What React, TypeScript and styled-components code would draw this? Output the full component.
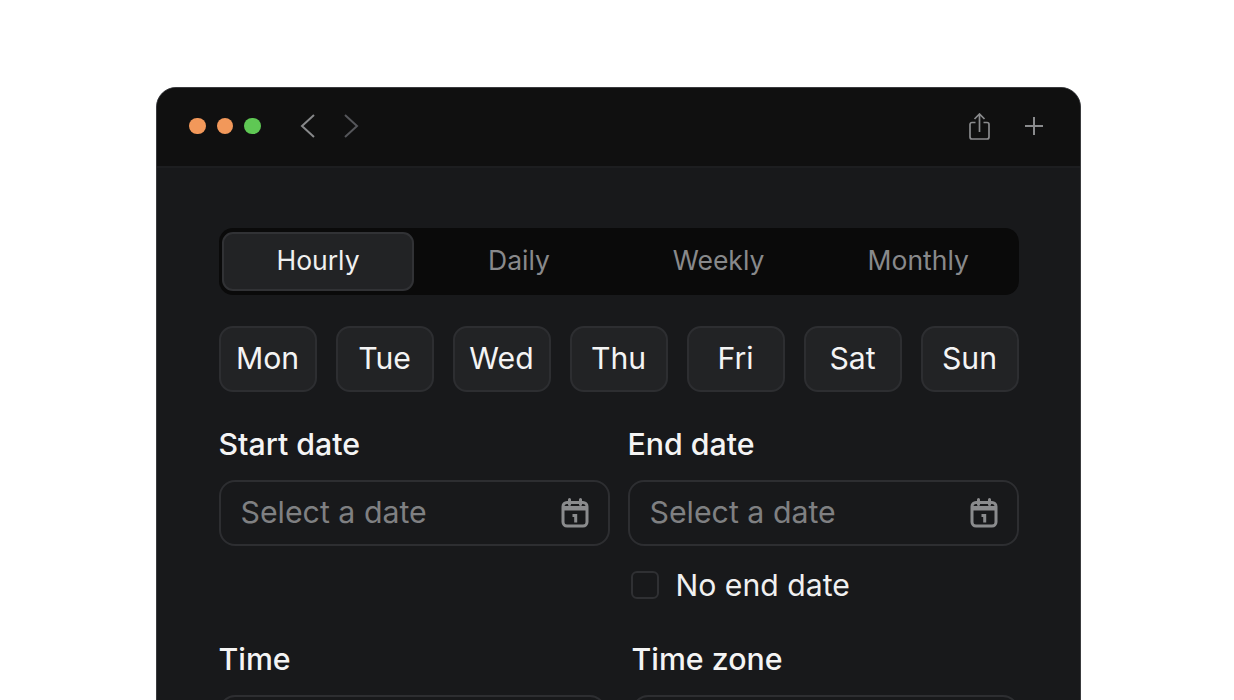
import React from "react";
import styled, { createGlobalStyle } from "styled-components";

const Global = createGlobalStyle`
  html, body { margin: 0; padding: 0; background: #fff; height: 700px; overflow: hidden; }
  body { font-family: Inter, "Liberation Sans", sans-serif; }
`;
const Page = styled.div`
  height: 700px; overflow: hidden; padding: 87px 153px 0 156px; box-sizing: border-box;
`;
const Win = styled.div`
  width: 925px; height: 760px; box-sizing: border-box; background: #18191b;
  border: 1px solid #3a3b3e; border-radius: 20px; overflow: hidden;
`;
const TitleBar = styled.div`
  height: 76px; background: #101010; border-bottom: 2px solid #1d1e20; display: flex; align-items: center;
  padding: 0 36px 2px 32px; box-sizing: content-box;
`;
const Dots = styled.div`display: flex; gap: 11px; margin-right: 39.5px;`;
const Dot = styled.span<{ $c: string }>`
  width: 16.5px; height: 16.5px; border-radius: 50%; background: ${p => p.$c};
`;
const Nav = styled.div`display: flex; gap: 29px; align-items: center; flex: 1;`;
const Tools = styled.div`display: flex; gap: 34px; align-items: center;`;
const Body = styled.div`padding: 60px 61.5px 0 61.5px; display: flex; flex-direction: column;`;
const Segments = styled.div`
  height: 67px; box-sizing: border-box; background: #0a0a0a; border-radius: 14px; padding: 4px 0 4px 3.5px;
  display: grid; grid-template-columns: 197px 200px 199px 1fr;
`;
const Segment = styled.div<{ $on?: boolean }>`
  display: flex; align-items: center; justify-content: center; font-size: 26.5px; border-radius: 11px;
  padding-bottom: 3px; box-sizing: border-box;
  color: ${p => (p.$on ? "#f0f0f0" : "#88898b")};
  background: ${p => (p.$on ? "#222325" : "transparent")};
  border: 2px solid ${p => (p.$on ? "#313235" : "transparent")};
  margin-right: ${p => (p.$on ? "5px" : "0")};
`;
const Days = styled.div`display: flex; justify-content: space-between; margin-top: 31px;`;
const Day = styled.div`
  width: 98px; height: 66px; box-sizing: border-box; border-radius: 14px; background: #222325; padding-bottom: 3px;
  border: 2px solid #2d2e31; color: #f4f4f4; font-size: 30.2px; display: flex; align-items: center; justify-content: center;
`;
const Row = styled.div`display: grid; grid-template-columns: 391px 391px; justify-content: space-between; margin-top: 34px;`;
const Col = styled.div`display: flex; flex-direction: column;`;
const Label = styled.div`color: #f4f4f4; font-size: 30.3px; font-weight: 500; line-height: 36px; margin-bottom: 18px; padding-top: 1px; margin-top: -1px;`;
const Field = styled.div`
  height: 66px; box-sizing: border-box; border: 2px solid #2d2e31; border-radius: 16px;
  display: flex; align-items: center; justify-content: space-between; padding: 0 18.5px 3px 20px;
  color: #7f8082; font-size: 30.3px;
`;
const Check = styled.label`display: flex; align-items: center; gap: 17px; margin-top: 25px; margin-left: 3px; color: #f0f0f0; font-size: 30.2px; line-height: 28px;`;
const Box = styled.span`width: 28px; height: 28px; box-sizing: border-box; border: 2px solid #2f3033; border-radius: 6px;`;
const Row2 = styled.div`display: grid; grid-template-columns: 387px 387px; justify-content: space-between; margin-top: 42px;`;
const CalendarIcon = styled.svg`margin-top: 2px; flex: none;`;

const Calendar = () => (
  <CalendarIcon width="28" height="30" viewBox="0 0 28 30" fill="none">
    <rect x="2" y="4.500" width="24" height="23.500" rx="4" stroke="#8a8b8d" strokeWidth="3" />
    <path d="M2 8h24v4.500H2z" fill="#8a8b8d" />
    <path d="M8.500 1.500v5M19.500 1.500v5" stroke="#8a8b8d" strokeWidth="3" strokeLinecap="round" />
    <path d="M11.500 17.500h3.200v7" stroke="#8a8b8d" strokeWidth="3" />
  </CalendarIcon>
);

export default function App() {
  return (
    <>
      <Global />
      <Page>
        <Win>
          <TitleBar>
            <Dots><Dot $c="#f2985a" /><Dot $c="#f2985a" /><Dot $c="#5fc854" /></Dots>
            <Nav>
              <svg width="15" height="24" viewBox="0 0 15 24" fill="none" stroke="#87888a" strokeWidth="2"><path d="M14 1 2 12l12 11" /></svg>
              <svg width="15" height="24" viewBox="0 0 15 24" fill="none" stroke="#55565a" strokeWidth="2"><path d="M1 1l12 11L1 23" /></svg>
            </Nav>
            <Tools>
              <svg width="21" height="27" viewBox="0 0 21 27" fill="none" stroke="#8a8b8d" strokeWidth="1.7"><path d="M6.500 9.500H3a2 2 0 0 0-2 2V24a2 2 0 0 0 2 2h15a2 2 0 0 0 2-2V11.500a2 2 0 0 0-2-2h-3.500" /><path d="M10.500 19V1.500M5.500 6l5-5 5 5" /></svg>
              <svg width="20" height="20" viewBox="0 0 20 20" fill="none" stroke="#8a8b8d" strokeWidth="2"><path d="M10 1v18M1 10h18" /></svg>
            </Tools>
          </TitleBar>
          <Body>
            <Segments>
              <Segment $on>Hourly</Segment><Segment>Daily</Segment><Segment>Weekly</Segment><Segment>Monthly</Segment>
            </Segments>
            <Days>{["Mon","Tue","Wed","Thu","Fri","Sat","Sun"].map(d => <Day key={d}>{d}</Day>)}</Days>
            <Row>
              <Col><Label>Start date</Label><Field>Select a date<Calendar /></Field></Col>
              <Col><Label>End date</Label><Field>Select a date<Calendar /></Field>
                <Check><Box />No end date</Check></Col>
            </Row>
            <Row2>
              <Col><Label>Time</Label><Field /></Col>
              <Col><Label>Time zone</Label><Field /></Col>
            </Row2>
          </Body>
        </Win>
      </Page>
    </>
  );
}
